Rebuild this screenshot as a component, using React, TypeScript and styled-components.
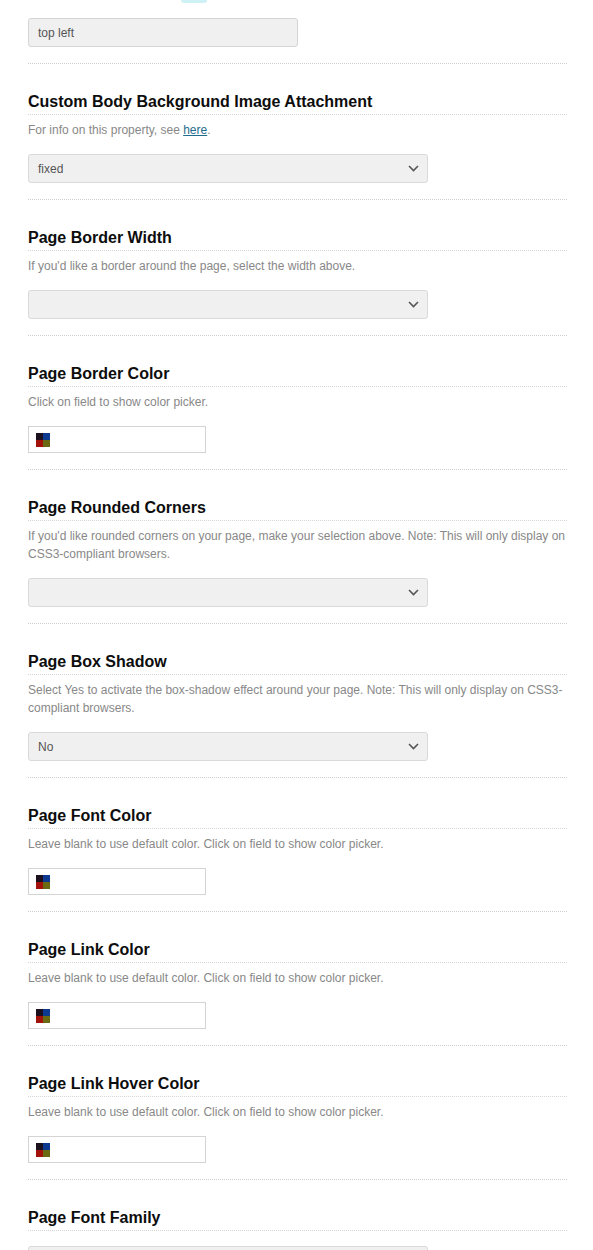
import styled, { createGlobalStyle } from 'styled-components'

const GlobalStyle = createGlobalStyle`
  body {
    margin: 0;
    background: #fff;
    font-family: "Liberation Sans", Arial, sans-serif;
  }
`

type Field =
  | { kind: 'select'; value?: string }
  | { kind: 'color' }
  | { kind: 'text'; value: string }

type Section = {
  title: string
  desc?: React.ReactNode
  field: Field
}

const colorDesc = 'Leave blank to use default color. Click on field to show color picker.'

const sections: Section[] = [
  {
    title: 'Custom Body Background Image Attachment',
    desc: (
      <>
        For info on this property, see <a href="#">here</a>.
      </>
    ),
    field: { kind: 'select', value: 'fixed' },
  },
  {
    title: 'Page Border Width',
    desc: "If you'd like a border around the page, select the width above.",
    field: { kind: 'select' },
  },
  {
    title: 'Page Border Color',
    desc: 'Click on field to show color picker.',
    field: { kind: 'color' },
  },
  {
    title: 'Page Rounded Corners',
    desc: "If you'd like rounded corners on your page, make your selection above. Note: This will only display on CSS3-compliant browsers.",
    field: { kind: 'select' },
  },
  {
    title: 'Page Box Shadow',
    desc: 'Select Yes to activate the box-shadow effect around your page. Note: This will only display on CSS3-compliant browsers.',
    field: { kind: 'select', value: 'No' },
  },
  { title: 'Page Font Color', desc: colorDesc, field: { kind: 'color' } },
  { title: 'Page Link Color', desc: colorDesc, field: { kind: 'color' } },
  { title: 'Page Link Hover Color', desc: colorDesc, field: { kind: 'color' } },
  { title: 'Page Font Family', field: { kind: 'select' } },
]

function Chevron() {
  return (
    <svg width="11" height="7" viewBox="0 0 11 7">
      <polyline points="1,1 5.5,5.5 10,1" fill="none" stroke="#555" strokeWidth="1.6" />
    </svg>
  )
}

function FieldControl({ field }: { field: Field }) {
  if (field.kind === 'color') {
    return (
      <ColorInput>
        <Swatch>
          <i style={{ background: '#1c0f1e' }} />
          <i style={{ background: '#0d3a90' }} />
          <i style={{ background: '#a3110b' }} />
          <i style={{ background: '#6b6a12' }} />
        </Swatch>
      </ColorInput>
    )
  }
  if (field.kind === 'text') {
    return <TextInput>{field.value}</TextInput>
  }
  return (
    <SelectBox>
      <span>{field.value}</span>
      <Chevron />
    </SelectBox>
  )
}

function App() {
  return (
    <Wrapper>
      <GlobalStyle />
      <TopEdge>
        <span />
      </TopEdge>
      <Block $first>
        <FieldRow>
          <FieldControl field={{ kind: 'text', value: 'top left' }} />
        </FieldRow>
      </Block>
      {sections.map((s) => (
        <Block key={s.title}>
          <Heading>{s.title}</Heading>
          {s.desc && <Desc>{s.desc}</Desc>}
          <FieldRow>
            <FieldControl field={s.field} />
          </FieldRow>
        </Block>
      ))}
    </Wrapper>
  )
}

const Wrapper = styled.div`
  padding: 0 26px 0 28px;
  width: 539px;
`

const TopEdge = styled.div`
  height: 3px;
  display: flex;

  span {
    margin-left: 153px;
    width: 26px;
    height: 3px;
    background: #cdf1f5;
    border-radius: 0 0 4px 4px;
  }
`

const Block = styled.div<{ $first?: boolean }>`
  padding-top: ${(p) => (p.$first ? '0' : '28px')};
  border-bottom: 1px dotted #cfcfcf;
`

const Heading = styled.h3`
  margin: 0;
  font-size: 16px;
  line-height: 20px;
  font-weight: bold;
  color: #0d0d0d;
  padding-bottom: 2px;
  border-bottom: 1px dotted #d6d6d6;
`

const Desc = styled.p`
  margin: 6px 0 0;
  font-size: 12px;
  line-height: 18px;
  color: #888;

  a {
    color: #1f6d8c;
    text-decoration: underline;
  }
`

const FieldRow = styled.div`
  padding: 15px 0 16px;
  display: flex;
`

const SelectBox = styled.div`
  box-sizing: border-box;
  width: 400px;
  height: 29px;
  background: #f0f0f0;
  border: 1px solid #d9d9d9;
  border-radius: 3px;
  display: flex;
  align-items: center;
  justify-content: space-between;
  padding: 1px 8px 0 9px;
  font-size: 12px;
  color: #555;

  svg {
    margin-top: -1px;
  }
`

const TextInput = styled.div`
  box-sizing: border-box;
  width: 270px;
  height: 29px;
  background: #f0f0f0;
  border: 1px solid #d4d4d4;
  border-radius: 3px;
  display: flex;
  align-items: center;
  padding: 1px 9px 0;
  font-size: 12px;
  color: #555;
`

const ColorInput = styled.div`
  box-sizing: border-box;
  width: 178px;
  height: 27px;
  background: #fff;
  border: 1px solid #d4d4d4;
  display: flex;
  align-items: center;
  padding-left: 7px;
`

const Swatch = styled.div`
  width: 14px;
  height: 14px;
  display: grid;
  grid-template-columns: 1fr 1fr;
  grid-template-rows: 1fr 1fr;

  i {
    display: block;
  }
`

export default App
